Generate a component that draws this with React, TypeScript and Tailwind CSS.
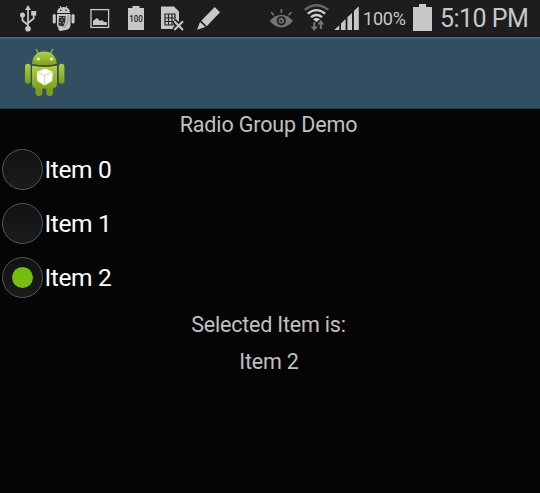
import { useState } from "react";

const iconClass = "h-[37px] shrink-0";

function UsbIcon() {
  return (
    <svg viewBox="20 0 17 37" className={`${iconClass} ml-5 w-[17px]`} fill="none" stroke="#c8c8c8" strokeWidth="1.7">
      <path d="M28 9v19M28 25l-5.5-4.5V16M28 23l5.7-4.5V14" />
      <path d="M28 5l3 5h-6z" fill="#c8c8c8" stroke="none" />
      <circle cx="28" cy="28.7" r="2.8" fill="#c8c8c8" stroke="none" />
      <circle cx="22.5" cy="15" r="2.5" fill="#c8c8c8" stroke="none" />
      <path d="M31.2 11h5v4.6h-5z" fill="#c8c8c8" stroke="none" />
    </svg>
  );
}

function DebugIcon() {
  return (
    <svg viewBox="52 0 23 37" className={`${iconClass} ml-[15px] w-[23px]`} fill="#c8c8c8">
      <path d="M60 6l1.5 3M67 6l-1.5 3" stroke="#c8c8c8" />
      <path d="M57 13q0-6 6.5-6t6.5 6z" />
      <circle cx="60.8" cy="10.2" r=".8" fill="#1d1d1d" />
      <circle cx="66" cy="10.2" r=".8" fill="#1d1d1d" />
      <rect x="52.7" y="14" width="3.1" height="9.5" rx="1.5" />
      <rect x="71.5" y="14" width="3.1" height="9.5" rx="1.5" />
      <path d="M57 14h13.5v11q0 4-4.5 5l-6 1q-2-1-2-4l-1-1z" />
      <path d="M59 16h6.5v5l-2 5.5-5-1z" fill="#303030" />
      <path d="M59.5 17.5h1.5M63 17.5h1.5M61 20h1.8M59.5 22.5h1.5M62.7 23h1.3" stroke="#aaa" />
      <path d="M68 15v7l-4 6" fill="none" stroke="#8b8b8b" />
    </svg>
  );
}

function PictureIcon() {
  return (
    <svg viewBox="90 0 20 37" className={`${iconClass} ml-[15px] w-5`}>
      <rect x="91" y="9.6" width="17.6" height="17.8" fill="none" stroke="#c8c8c8" strokeWidth="1.3" />
      <path d="M93 25v-4l4-3 3 3 2-1 2 2h2l1 1v2z" fill="#c8c8c8" />
    </svg>
  );
}

function BatteryHundredIcon() {
  return (
    <svg viewBox="128 0 17 37" className={`${iconClass} ml-[18px] w-[17px]`}>
      <path d="M128 8h4.5V6h7v2h4.5v22h-16z" fill="#c8c8c8" />
      <text x="136.1" y="22.2" textAnchor="middle" textLength="13.5" lengthAdjust="spacingAndGlyphs" fill="#222" className="font-['Roboto',sans-serif] text-[9px] font-medium">100</text>
    </svg>
  );
}

function SimIcon() {
  return (
    <svg viewBox="161 0 24 37" className={`${iconClass} ml-4 w-6`}>
      <path d="M161 6.5h13l5 5V29h-18z" fill="#c8c8c8" />
      <path d="M165 14h10v11h-10zM165 18h10M165 21.5h10M168.5 14v11M172 14v11" fill="none" stroke="#242424" strokeWidth="1.2" />
      <path d="M174.3 21l8.5 9M182.8 21l-8.5 9" stroke="#1d1d1d" strokeWidth="5" />
      <path d="M174.3 21.2l8.7 8.8M183 21.2l-8.7 8.8" stroke="#c8c8c8" strokeWidth="2" />
    </svg>
  );
}

function PencilIcon() {
  return (
    <svg viewBox="196 0 25 37" className={`${iconClass} ml-[11px] w-[25px]`} fill="#c8c8c8">
      <path d="M214.7 7l5.3 5.2-13.2 14-5.5-5.5zM200 22l5.5 5-8.5 2.8z" />
    </svg>
  );
}

function EyeIcon() {
  return (
    <svg viewBox="269 0 25 37" className={`${iconClass} ml-12 w-[25px]`}>
      <path d="M269.5 21q12-12.5 23.5 0-11.5 13-23.5 0z" fill="#747474" />
      <circle cx="281.3" cy="20.8" r="4.6" fill="#1d1d1d" />
      <circle cx="281.3" cy="20.8" r="2.8" fill="#747474" />
      <path d="M281.3 20.8v-3M271.2 12l2.5 3.2M281.3 9v4M291.3 12l-2.5 3.2" stroke="#747474" strokeWidth="1.6" />
      <path d="M280 20l2 2" stroke="#1d1d1d" strokeWidth="1.5" />
    </svg>
  );
}

function WifiIcon() {
  return (
    <svg viewBox="304 0 25 37" className={`${iconClass} ml-2.5 w-[25px]`} fill="none" strokeWidth="2.3">
      <path d="M304.7 9.8q11.8-9 23.6 0" stroke="#686868" />
      <path d="M307.8 13.6q8.7-7 17.4 0M311 17.2q5.5-4.4 11 0" stroke="#d2d2d2" />
      <path d="M313 19.2q3.5-2.6 7 0L316.5 22z" fill="#d2d2d2" />
      <path d="M314.3 22v6M320.8 29v-6" stroke="#777" strokeWidth="2" />
      <path d="M310.8 26.5h7l-3.5 4.5zM317.3 24.5h7l-3.5-4.7z" fill="#777" />
    </svg>
  );
}

function SignalIcon() {
  return (
    <svg viewBox="334 0 25 37" className={`${iconClass} ml-[5px] w-[25px]`} fill="#c8c8c8">
      <path d="M334.3 30l5-4.8V30zM341 23.5l4.6-4.4V30H341zM347.4 17.3l4.6-4.4V30h-4.6zM353.9 11l4.9-4.7V30h-4.9z" />
    </svg>
  );
}

function StatusBar() {
  return (
    <header className="flex h-[37px] items-center overflow-hidden bg-[#1d1d1d] whitespace-nowrap text-[#c8c8c8]">
      <UsbIcon />
      <DebugIcon />
      <PictureIcon />
      <BatteryHundredIcon />
      <SimIcon />
      <PencilIcon />
      <EyeIcon />
      <WifiIcon />
      <SignalIcon />
      <span className="ml-[4px] w-[50px] shrink-0 text-[18px] leading-6 tracking-[-0.2px]">100%</span>
      <svg viewBox="413 0 19 37" className={`${iconClass} w-[19px]`}>
        <path d="M413 7h6V4h7v3h6v24h-19z" fill="#c8c8c8" />
      </svg>
      <span className="ml-[8px] shrink-0 pt-px text-[25px] leading-8 tracking-[-0.55px]">5:10 PM</span>
    </header>
  );
}

function AppIcon() {
  return (
    <svg viewBox="24 46 42 52" className="h-[52px] w-[42px]">
      <defs>
        <linearGradient id="body" x1="0" y1="0" x2="0" y2="1">
          <stop offset="0" stopColor="#b2ce49" />
          <stop offset=".6" stopColor="#94b52a" />
          <stop offset="1" stopColor="#7d9f1b" />
        </linearGradient>
        <linearGradient id="arm" x1="0" y1="0" x2="0" y2="1">
          <stop offset="0" stopColor="#b0cd49" />
          <stop offset="1" stopColor="#7b9d18" />
        </linearGradient>
      </defs>
      <path d="M36.3 49.5l3 5M52.8 49.5l-3 5" stroke="#9dbb32" strokeWidth="1.4" strokeLinecap="round" />
      <rect x="35.5" y="83" width="6.8" height="13" rx="3.3" fill="#7b9d18" />
      <rect x="46.3" y="83" width="6.8" height="13" rx="3.3" fill="#7b9d18" />
      <rect x="25" y="63.7" width="5.6" height="20" rx="2.8" fill="url(#arm)" />
      <rect x="58.8" y="63.7" width="5.6" height="20" rx="2.8" fill="url(#arm)" />
      <path d="M32 64Q33 51.5 44.3 51.5T56.8 64q-12 2.5-24.8 0z" fill="url(#body)" />
      <path d="M32 65.5q12.5 2.5 25 0V84q0 4-4 4.3-8.5 1-17 0-4-.3-4-4.3z" fill="url(#body)" />
      <path d="M32 64.8q12.5 2.4 25 0" fill="none" stroke="#384b24" strokeWidth="1.1" />
      <circle cx="38.3" cy="59" r="1.5" fill="#f5f7e9" />
      <circle cx="51.5" cy="59" r="1.5" fill="#f5f7e9" />
      <path d="M45 68.5l7.7 3.6-.5 9-7.7 4.3-7.2-4.5-.5-8.9z" fill="#fff" />
      <path d="M37 72.2l7.3 3.3 8.3-3.3M44.4 75.5v9.5" fill="none" stroke="#bccb97" strokeWidth=".8" />
    </svg>
  );
}

export default function App() {
  const [selected, setSelected] = useState(2);
  return (
    <div className="flex h-[493px] w-[540px] flex-col overflow-hidden bg-[#050505] font-['Roboto',sans-serif]">
      <StatusBar />
      <div className="flex h-[72px] shrink-0 items-start border-t-2 border-b border-t-[#42667f] border-b-[#253e50] bg-[#324f62] pt-[7px] pl-6">
        <AppIcon />
      </div>
      <main className="flex flex-col text-[21.5px] text-[#c0c0c0]">
        <h1 className="h-[33px] pr-[3px] text-center leading-[32px] tracking-[-0.13px]">Radio Group Demo</h1>
        <div role="radiogroup" aria-label="Items" className="flex flex-col text-[24.5px] text-white">
          {[0, 1, 2].map((item) => (
            <button key={item} role="radio" aria-checked={selected === item} onClick={() => setSelected(item)} className="flex h-[54px] items-center pl-[1.5px] text-left">
              <span className="flex size-[41px] items-center justify-center rounded-full border-[1.5px] border-[#565656] bg-[linear-gradient(#111214,#191b1d)]">
                {selected === item && <span className="size-[21px] rounded-full bg-[#75bd10]" />}
              </span>
              <span className="ml-[2px] pt-0.5 leading-8 tracking-[-0.35px]">Item {item}</span>
            </button>
          ))}
        </div>
        <p className="h-[37px] pr-[3px] text-center leading-[41px] tracking-[-0.2px]">Selected Item is:</p>
        <p className="h-[37px] pr-[2px] text-center leading-[42px] tracking-[-0.2px]">Item {selected}</p>
      </main>
    </div>
  );
}
